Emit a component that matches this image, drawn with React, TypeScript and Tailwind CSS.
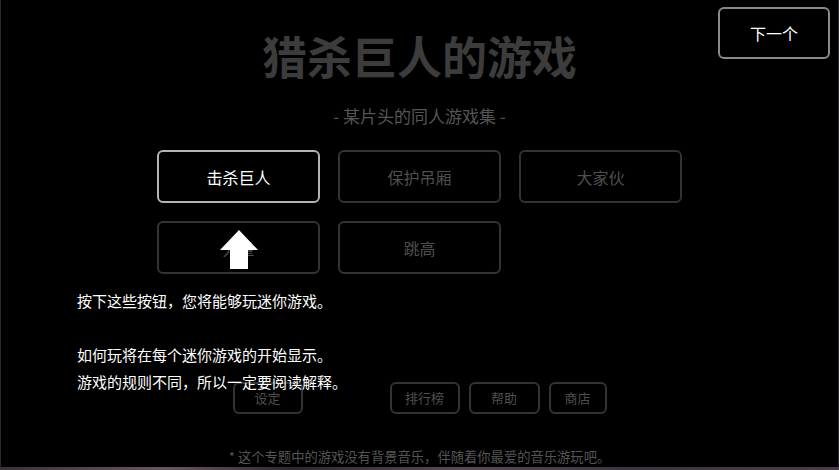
import React from "react";

const games = [
  { label: "击杀巨人", active: true },
  { label: "保护吊厢" },
  { label: "大家伙" },
  { label: "力量" },
  { label: "跳高" },
];

const intro = [
  "按下这些按钮，您将能够玩迷你游戏。",
  "",
  "如何玩将在每个迷你游戏的开始显示。",
  "游戏的规则不同，所以一定要阅读解释。",
];

function GameButton({ label, active }: { label: string; active?: boolean }) {
  return (
    <button
      className={`h-[53px] rounded-md border-2 text-[16px] ${
        active ? "border-[#b4b4b4] text-white" : "border-[#333] text-[#4f4f4f]"
      }`}
    >
      {label}
    </button>
  );
}

function SmallButton({ label, width }: { label: string; width: string }) {
  return (
    <button
      className={`${width} h-[32px] rounded-md border-2 border-[#333] text-[13px] text-[#4f4f4f]`}
    >
      {label}
    </button>
  );
}

export default function App() {
  return (
    <div className="w-[839px] h-[470px] bg-[#2c2430] font-['Noto_Sans_CJK_SC','Noto_Sans',sans-serif] overflow-hidden">
      <div className="relative mx-[1px] h-[467px] bg-black flex flex-col items-center">
        {/* title block */}
        <h1 className="mt-[29px] text-[45px] leading-[54px] font-bold text-[#3c3c3c]">
          猎杀巨人的游戏
        </h1>
        <p className="mt-[21px] text-[17px] leading-[24px] text-[#555]">
          - 某片头的同人游戏集 -
        </p>

        {/* game grid */}
        <div className="mt-[22px] grid grid-cols-[163px_163px_163px] gap-[18px]">
          {games.map((g) => (
            <GameButton key={g.label} label={g.label} active={g.active} />
          ))}
        </div>

        {/* bottom menu */}
        <div className="mt-[108px] w-[374px] flex justify-between">
          <SmallButton label="设定" width="w-[70px]" />
          <div className="flex gap-[9px]">
            <SmallButton label="排行榜" width="w-[70px]" />
            <SmallButton label="帮助" width="w-[71px]" />
            <SmallButton label="商店" width="w-[58px]" />
          </div>
        </div>

        <p className="mt-[33px] text-[13.3px] leading-[20px] text-[#555]">
          * 这个专题中的游戏没有背景音乐，伴随着你最爱的音乐游玩吧。
        </p>

        {/* next button */}
        <button className="absolute right-[8px] top-[7px] w-[112px] h-[52px] rounded-md border-2 border-[#8a8a8a] text-white text-[16px]">
          下一个
        </button>

        {/* tutorial pointer */}
        <svg
          className="absolute left-[219px] top-[230px]"
          width="38"
          height="40"
          viewBox="0 0 38 40"
        >
          <path d="M19 0 L38 20 L28 20 L28 39 L10 39 L10 20 L0 20 Z" fill="#fff" />
        </svg>

        {/* tutorial text */}
        <div className="absolute left-[76px] top-[287px] text-white text-[15px] leading-[27px]">
          {intro.map((line, i) => (
            <p key={i} className="h-[27px]">
              {line}
            </p>
          ))}
        </div>
      </div>
      <div className="h-[3px] bg-[linear-gradient(90deg,#3a3038,#6a5660_20%,#2e2630_35%,#5a4a58_55%,#3c3440_75%,#4a3c48)]" />
    </div>
  );
}
